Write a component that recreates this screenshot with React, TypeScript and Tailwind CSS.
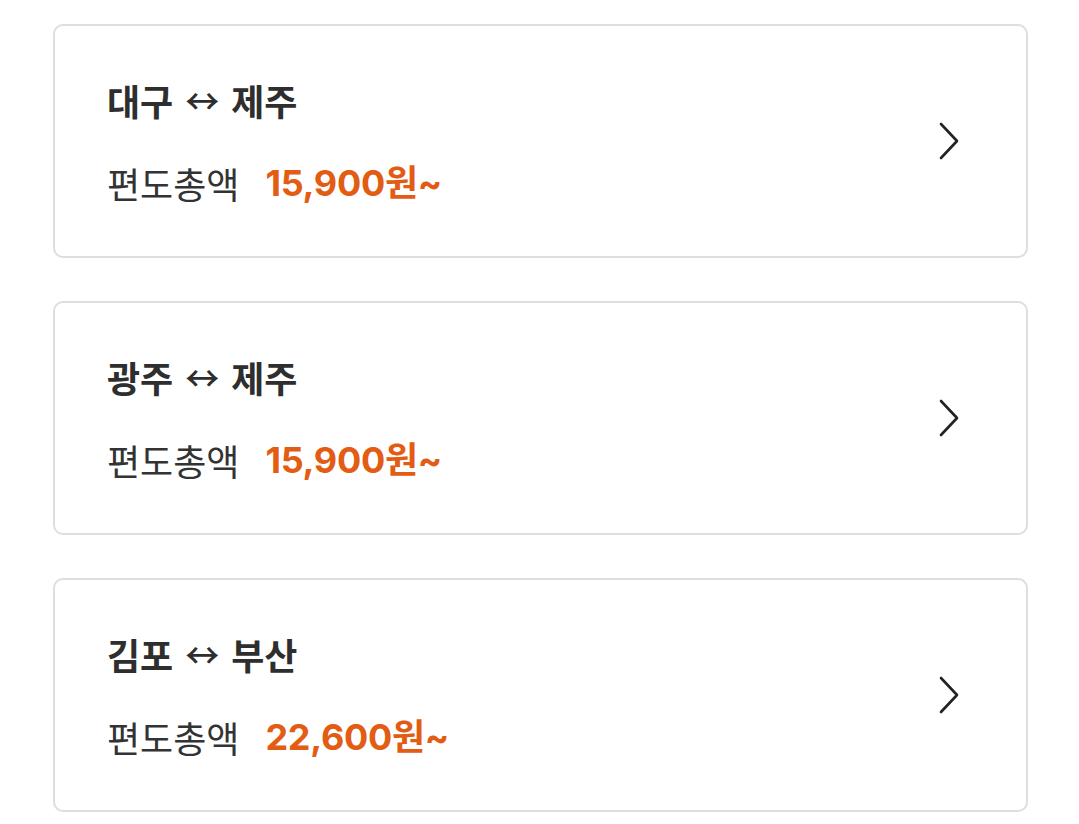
import {ReactElement} from "react";

interface Route {
    from: string;
    to: string;
    price: string;
}

const routes: Route[] = [
    {from: "대구", to: "제주", price: "15,900"},
    {from: "광주", to: "제주", price: "15,900"},
    {from: "김포", to: "부산", price: "22,600"},
];

const Chevron = () => (
    <svg width="22" height="38" viewBox="0 0 22 38" fill="none" className="shrink-0">
        <path d="M3 2 L19 19 L3 36" stroke="#222" strokeWidth="2.6" strokeLinecap="round" strokeLinejoin="round"/>
    </svg>
);

const RouteCard = ({route}: { route: Route }): ReactElement => (
    <div className="flex items-center justify-between h-[234px] border-2 border-[#dedede] rounded-[10px] bg-white pl-[52px] pr-[66px]">
        <div className="flex flex-col gap-[39px]">
            <h2 className="flex items-center gap-[12px] text-[36px] leading-[44px] font-bold text-[#2e2e2e]">
                <span>{route.from}</span>
                <span className="font-medium text-[34px]">↔</span>
                <span>{route.to}</span>
            </h2>
            <p className="flex items-center gap-[26px] text-[36px] leading-[44px]">
                <span className="text-[#333]">편도총액</span>
                <span className="font-['Inter','Noto_Sans_CJK_KR',sans-serif] font-bold text-[#e35c14] tracking-[-0.3px]">{route.price}원~</span>
            </p>
        </div>
        <Chevron/>
    </div>
);

const App = (): ReactElement => {
    return (
        <div className="min-h-screen bg-white pl-[53px] pr-[51px] pt-[24px] font-['Noto_Sans_CJK_KR','Noto_Sans',sans-serif]">
            <div className="flex flex-col gap-[43px]">
                {routes.map((r) => <RouteCard key={r.from + r.to} route={r}/>)}
            </div>
        </div>
    );
}

export default App;
